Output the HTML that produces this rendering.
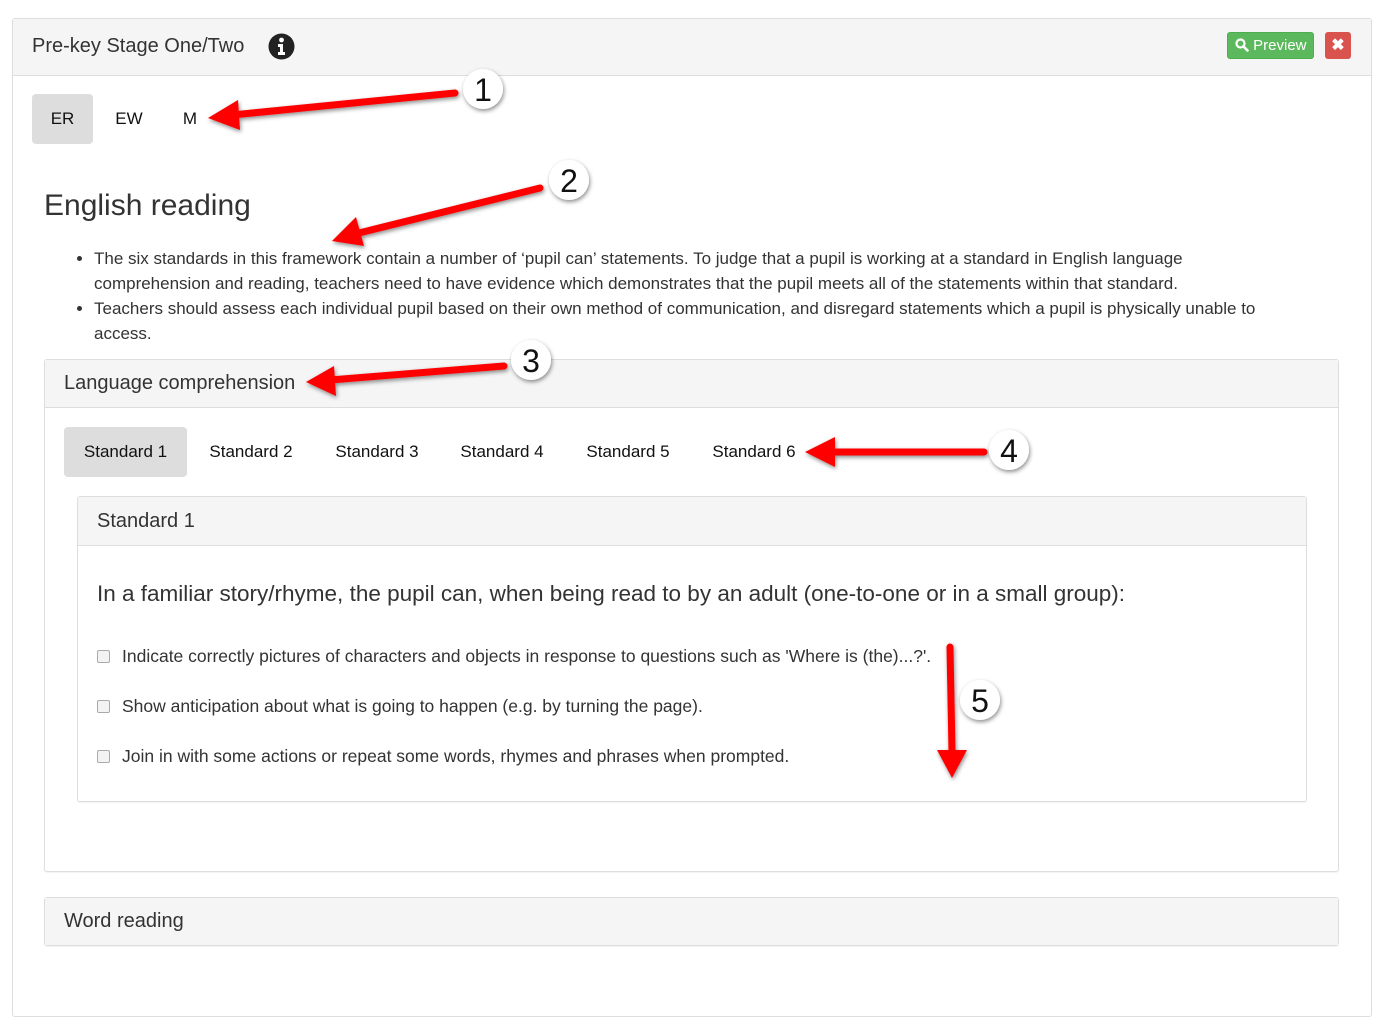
<!DOCTYPE html>
<html><head><meta charset="utf-8"><style>
*{box-sizing:border-box;margin:0;padding:0}
body{width:1388px;height:1031px;background:#fff;font-family:"Liberation Sans",Arial,sans-serif;color:#333;position:relative;overflow:hidden}
.abs{position:absolute}
.outer{left:12px;top:18px;width:1360px;height:999px;border:1px solid #ddd;border-radius:3px}
.hdr{left:13px;top:19px;width:1358px;height:57px;background:#f5f5f5;border-bottom:1px solid #ddd}
.pill{position:absolute;height:50px;line-height:50px;font-size:17px;color:#111;border-radius:4px;text-align:center}
.panel{position:absolute;border:1px solid #ddd;border-radius:3px;box-shadow:0 1px 1px rgba(0,0,0,.05)}
.ph{position:absolute;left:0;top:0;right:0;background:#f5f5f5;border-bottom:1px solid #ddd;font-size:20px;color:#333}
.cb{position:absolute;left:97px;width:13px;height:13px;border:1px solid #aaa;border-radius:2px;background:#f3f3f3}
.it{position:absolute;left:122px;font-size:17.5px;color:#333}
</style></head><body>
<div class="abs outer"></div>
<div class="abs hdr"></div>
<div class="abs" style="left:32px;top:35px;font-size:20px;color:#333">Pre-key Stage One/Two</div>
<svg class="abs" style="left:268px;top:33px" width="27" height="27" viewBox="0 0 27 27"><circle cx="13.5" cy="13.5" r="13" fill="#222"/><circle cx="13.5" cy="7" r="2.4" fill="#fff"/><path d="M10 11h5v8h2v3h-7v-3h2v-5h-2z" fill="#fff"/></svg>
<div class="abs" style="left:1227px;top:32px;width:87px;height:27px;background:#5cb85c;border:1px solid #4cae4c;border-radius:3px;color:#fff;font-size:15px;line-height:25px;padding-left:7px"><svg width="14" height="14" viewBox="0 0 14 14" style="vertical-align:-2px"><circle cx="5.5" cy="5.5" r="4" stroke="#fff" stroke-width="2.2" fill="none"/><path d="M8.5 8.5l4 4" stroke="#fff" stroke-width="2.6" stroke-linecap="round"/></svg> Preview</div>
<div class="abs" style="left:1325px;top:32px;width:26px;height:27px;background:#d9534f;border-radius:3px;color:#fff;font-size:16px;font-weight:bold;text-align:center;line-height:27px">✖</div>

<div class="pill" style="left:32px;top:94px;width:61px;background:#ddd">ER</div>
<div class="pill" style="left:103px;top:94px;width:52px">EW</div>
<div class="pill" style="left:170px;top:94px;width:40px">M</div>

<div class="abs" style="left:44px;top:189px;font-size:30px;color:#333">English reading</div>
<ul class="abs" style="left:94px;top:246px;width:1200px;font-size:17px;line-height:25px;color:#333">
<li>The six standards in this framework contain a number of ‘pupil can’ statements. To judge that a pupil is working at a standard in English language comprehension and reading, teachers need to have evidence which demonstrates that the pupil meets all of the statements within that standard.</li>
<li>Teachers should assess each individual pupil based on their own method of communication, and disregard statements which a pupil is physically unable to access.</li>
</ul>

<div class="panel" style="left:44px;top:359px;width:1295px;height:513px">
<div class="ph" style="height:48px;line-height:47px;padding-left:19px">Language comprehension</div>
</div>
<div class="pill" style="left:64px;top:427px;width:123px;background:#ddd">Standard 1</div>
<div class="pill" style="left:196px;top:427px;width:110px">Standard 2</div>
<div class="pill" style="left:322px;top:427px;width:110px">Standard 3</div>
<div class="pill" style="left:447px;top:427px;width:110px">Standard 4</div>
<div class="pill" style="left:573px;top:427px;width:110px">Standard 5</div>
<div class="pill" style="left:699px;top:427px;width:110px">Standard 6</div>

<div class="panel" style="left:77px;top:496px;width:1230px;height:306px">
<div class="ph" style="height:49px;line-height:48px;padding-left:19px">Standard 1</div>
</div>
<div class="abs" style="left:97px;top:581px;font-size:22.5px;color:#333">In a familiar story/rhyme, the pupil can, when being read to by an adult (one-to-one or in a small group):</div>
<div class="cb" style="top:650px"></div><div class="it" style="top:646px">Indicate correctly pictures of characters and objects in response to questions such as 'Where is (the)...?'.</div>
<div class="cb" style="top:700px"></div><div class="it" style="top:696px">Show anticipation about what is going to happen (e.g. by turning the page).</div>
<div class="cb" style="top:750px"></div><div class="it" style="top:746px">Join in with some actions or repeat some words, rhymes and phrases when prompted.</div>

<div class="panel" style="left:44px;top:897px;width:1295px;height:49px">
<div class="ph" style="height:47px;line-height:47px;padding-left:19px;border-bottom:none">Word reading</div>
</div>

<svg class="abs" style="left:0;top:0" width="1388" height="1031">
<defs><filter id="s" x="-50%" y="-50%" width="200%" height="200%"><feDropShadow dx="1" dy="2" stdDeviation="2" flood-opacity=".45"/></filter></defs>
<g fill="#f00" stroke="#f00" stroke-linecap="round" filter="url(#s)">
<line x1="455" y1="93" x2="232" y2="115" stroke-width="7"/><polygon points="208,118 238,100 240,130" stroke="none"/>
<line x1="540" y1="188" x2="355" y2="234" stroke-width="7"/><polygon points="332,241 356,217 364,246" stroke="none"/>
<line x1="504" y1="366" x2="330" y2="380" stroke-width="7"/><polygon points="306,382 334,366 336,396" stroke="none"/>
<line x1="984" y1="452" x2="830" y2="452" stroke-width="7"/><polygon points="805,452 835,437 835,467" stroke="none"/>
<line x1="950" y1="647" x2="952" y2="752" stroke-width="7"/><polygon points="952,778 937,750 967,750" stroke="none"/>
</g>
<g filter="url(#s)" fill="#fff"><circle cx="483" cy="89" r="20"/><circle cx="569" cy="180" r="20"/><circle cx="531" cy="360" r="20"/><circle cx="1009" cy="450" r="20"/><circle cx="980" cy="700" r="20"/></g>
<g font-family="Liberation Sans,sans-serif" font-size="32" fill="#111" text-anchor="middle">
<text x="483" y="101">1</text><text x="569" y="192">2</text><text x="531" y="372">3</text><text x="1009" y="462">4</text><text x="980" y="712">5</text>
</g>
</svg>
</body></html>
